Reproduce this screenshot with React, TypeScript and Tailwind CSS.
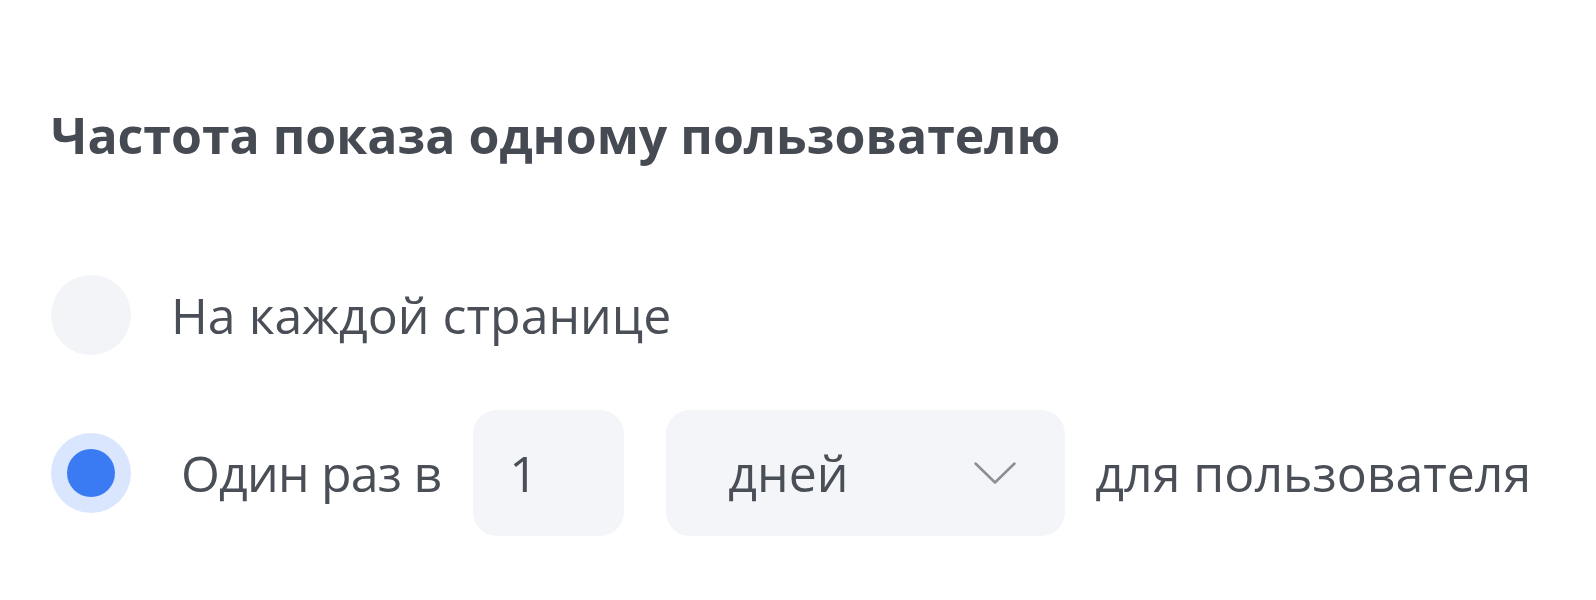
const App = () => {
  return (
    <div
      className="min-h-[600px] w-full bg-white pl-[51px] pt-[105px] text-[#4a4f57]"
      style={{ fontFamily: '"Open Sans", "Noto Sans", sans-serif' }}
    >
      <h2 className="text-[50px] font-bold leading-[60px] text-[#464b53]">
        Частота показа одному пользователю
      </h2>

      <div className="mt-[110px] flex flex-col gap-[55px]">
        <label className="flex items-center">
          <span className="h-[80px] w-[80px] rounded-full bg-[#f2f4f7]"></span>
          <span className="ml-[40px] text-[50px] leading-[60px]">На каждой странице</span>
        </label>

        <div className="flex items-center">
          <span className="flex h-[80px] w-[80px] items-center justify-center rounded-full bg-[#d9e6fd]">
            <span className="h-[48px] w-[48px] rounded-full bg-[#3a7bf4]"></span>
          </span>
          <span className="ml-[50px] text-[50px] leading-[60px] tracking-[-0.8px]">Один раз в</span>
          <div className="ml-[32px] flex h-[126px] w-[151px] items-center rounded-[24px] bg-[#f3f5f9] pl-[36px] text-[50px]">
            1
          </div>
          <div className="ml-[42px] flex h-[126px] w-[399px] items-center justify-between rounded-[24px] bg-[#f3f5f9] pl-[62px] pr-[49px] text-[50px]">
            <span>дней</span>
            <svg width="42" height="22" viewBox="0 0 42 22" fill="none" className="text-[#8a8e96]">
              <path d="M1.5 1.5 L21 20.5 L40.5 1.5" stroke="currentColor" strokeWidth="2.5" strokeLinecap="round" strokeLinejoin="round" />
            </svg>
          </div>
          <span className="ml-[30px] text-[50px] leading-[60px]">для пользователя</span>
        </div>
      </div>
    </div>
  );
};

export default App;
